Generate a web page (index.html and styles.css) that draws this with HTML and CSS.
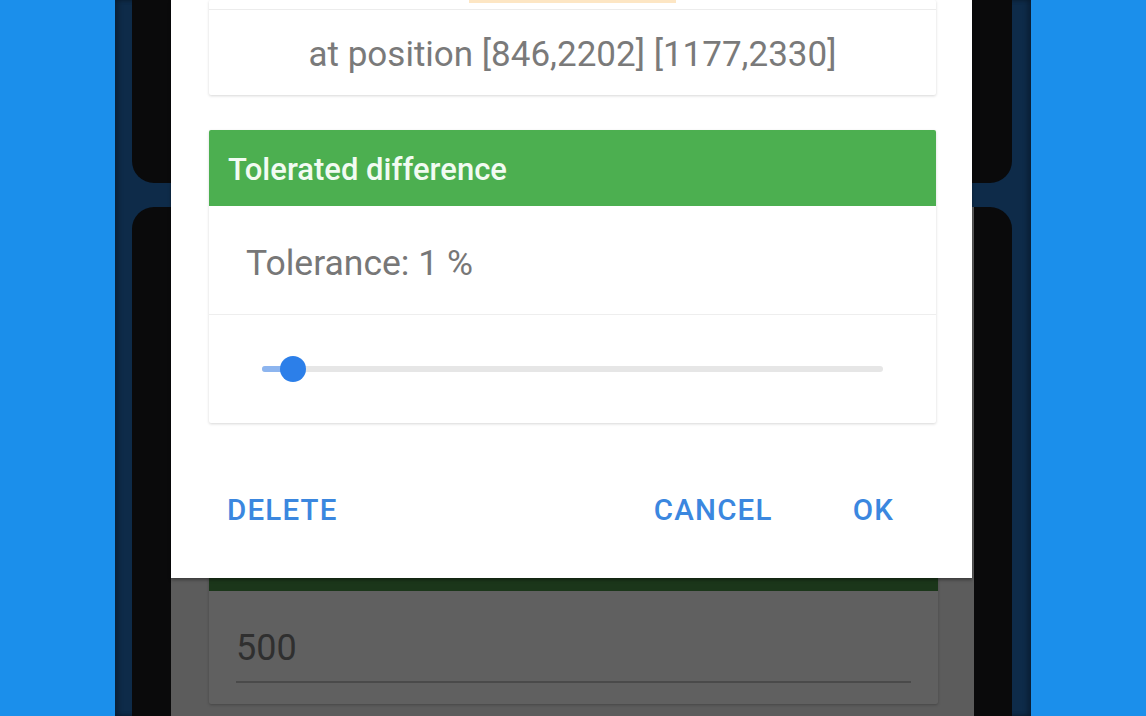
FILE: index.html
```html
<!DOCTYPE html>
<html>
<head>
<meta charset="utf-8">
<link rel="stylesheet" href="styles.css">
</head>
<body>
<div class="stage">
  <div class="side"></div>
  <div class="phone">
    <div class="backdrop">
      <div class="bcard bcard-top"></div>
      <div class="bcard bcard-main">
        <div class="screen">
          <div class="scard">
            <div class="scard-head"></div>
            <div class="scard-body">
              <div class="sinput">500</div>
              <div class="sline"></div>
            </div>
          </div>
        </div>
      </div>
    </div>
    <div class="dialog">
      <div class="card">
        <div class="card-prev"><div class="peach"></div></div>
        <div class="pos-row">at position [846,2202] [1177,2330]</div>
      </div>
      <div class="card card-tol">
        <div class="tol-head">Tolerated difference</div>
        <div class="tol-row">Tolerance: 1 %</div>
        <div class="slider-row">
          <div class="track">
            <div class="track-fill"></div>
            <div class="thumb"></div>
          </div>
        </div>
      </div>
      <div class="actions">
        <span class="btn">DELETE</span>
        <span class="spacer"></span>
        <span class="btn">CANCEL</span>
        <span class="btn btn-ok">OK</span>
      </div>
    </div>
  </div>
  <div class="side"></div>
</div>
</body>
</html>
```
FILE: styles.css
```css
html, body {
  margin: 0;
  padding: 0;
  width: 1146px;
  height: 716px;
  overflow: hidden;
  background: #1b8feb;
  font-family: Roboto, "Liberation Sans", sans-serif;
}
.stage {
  display: flex;
  width: 1146px;
  height: 716px;
}
.side {
  flex: 1 1 0;
  background: #1b8feb;
}
.phone {
  position: relative;
  width: 916px;
  height: 716px;
  flex: 0 0 916px;
  background: #0e2b49;
  box-shadow: inset 4px 0 4px rgba(0,0,0,0.25), inset -4px 0 4px rgba(0,0,0,0.25);
  overflow: hidden;
}
.backdrop {
  display: flex;
  flex-direction: column;
  gap: 24px;
  padding: 0 19px 0 17px;
  margin-top: -60px;
}
.bcard {
  background: #0a0a0b;
  border-radius: 22px;
}
.bcard-top {
  height: 243px;
}
.bcard-main {
  height: 600px;
  padding: 0 38px 0 39px;
}
.screen {
  height: 100%;
  background: #5c5c5c;
  padding: 314px 36px 0 38px;
  box-sizing: border-box;
}
.scard {
  background: #606060;
  box-shadow: 0 1px 3px rgba(0,0,0,0.25);
  border-radius: 2px;
}
.scard-head {
  height: 70px;
  background: #1b361a;
}
.scard-body {
  padding: 37px 27px 21px 27px;
}
.sinput {
  font-size: 36px;
  line-height: 40px;
  color: #2f2f2f;
}
.sline {
  margin-top: 13px;
  height: 2px;
  background: #4a4a4a;
}
.dialog {
  position: absolute;
  left: 56px;
  top: 0;
  width: 801px;
  height: 578px;
  background: #ffffff;
  box-shadow: 0 2px 3px rgba(0,0,0,0.35);
  padding: 0 36px 0 38px;
  box-sizing: border-box;
  display: flex;
  flex-direction: column;
}
.card {
  background: #fff;
  box-shadow: 0 1px 3px rgba(0,0,0,0.16);
  border-radius: 2px;
}
.card-prev {
  height: 9px;
  border-bottom: 1px solid #ececec;
  display: flex;
  justify-content: center;
}
.peach {
  width: 207px;
  height: 3px;
  background: #fde6c4;
}
.pos-row {
  height: 85px;
  display: flex;
  align-items: center;
  justify-content: center;
  padding-top: 4px;
  box-sizing: border-box;
  font-size: 35px;
  color: #7a7a7a;
}
.card-tol {
  margin-top: 35px;
}
.tol-head {
  height: 76px;
  background: #4caf50;
  color: #f2fbf2;
  font-weight: 500;
  font-size: 31px;
  display: flex;
  align-items: center;
  padding-left: 19px;
  padding-top: 3px;
  box-sizing: border-box;
  border-radius: 2px 2px 0 0;
}
.tol-row {
  height: 109px;
  display: flex;
  align-items: center;
  padding-left: 37px;
  padding-top: 6px;
  box-sizing: border-box;
  font-size: 35.5px;
  color: #777;
  border-bottom: 1px solid #eeeeee;
}
.slider-row {
  height: 108px;
  display: flex;
  align-items: center;
  padding: 0 53px 0 53px;
}
.track {
  position: relative;
  flex: 1;
  height: 6px;
  border-radius: 3px;
  background: #e6e6e6;
}
.track-fill {
  width: 31px;
  height: 6px;
  border-radius: 3px 0 0 3px;
  background: #8db5ef;
}
.thumb {
  position: absolute;
  left: 18px;
  top: -10px;
  width: 26px;
  height: 26px;
  border-radius: 50%;
  background: #2c7fe9;
}
.actions {
  display: flex;
  align-items: center;
  padding: 70px 42px 0 18px;
  height: 34px;
}
.btn {
  font-size: 29.5px;
  font-weight: 500;
  letter-spacing: 1.2px;
  color: #3b87df;
  line-height: 34px;
}
.spacer {
  flex: 1;
}
.btn-ok {
  margin-left: 80px;
}
```
